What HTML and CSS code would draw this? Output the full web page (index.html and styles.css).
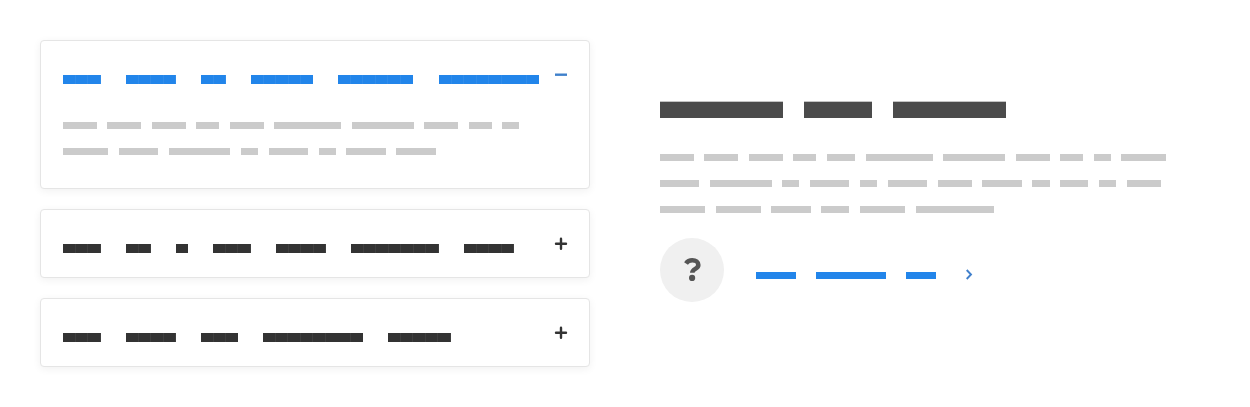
FILE: index.html
```html
<!DOCTYPE html>
<html lang="en">
<head>
<meta charset="utf-8">
<title>FAQ</title>
<link rel="stylesheet" href="styles.css">
</head>
<body>
<main class="faq">
  <section class="accordion">
    <article class="card card-open">
      <header class="card-head">
        <h3 class="words question"><i style="--n:3"></i><i style="--n:4"></i><i style="--n:2"></i><i style="--n:5"></i><i style="--n:6"></i><i style="--n:8"></i></h3>
        <svg class="toggle" viewBox="0 0 14 14"><path d="M1 7.7H13"/></svg>
      </header>
      <div class="copy">
        <p class="words"><i style="--n:6"></i><i style="--n:6"></i><i style="--n:6"></i><i style="--n:4"></i><i style="--n:6"></i><i style="--n:12"></i><i style="--n:11"></i><i style="--n:6"></i><i style="--n:4"></i><i style="--n:3"></i></p>
        <p class="words"><i style="--n:8"></i><i style="--n:7"></i><i style="--n:11"></i><i style="--n:3"></i><i style="--n:7"></i><i style="--n:3"></i><i style="--n:7"></i><i style="--n:7"></i></p>
      </div>
    </article>
    <article class="card">
      <header class="card-head">
        <h3 class="words question"><i style="--n:3"></i><i style="--n:2"></i><i style="--n:1"></i><i style="--n:3"></i><i style="--n:4"></i><i style="--n:7"></i><i style="--n:4"></i></h3>
        <svg class="toggle" viewBox="0 0 14 14"><path d="M2 6.8H12M7 1.8V11.8"/></svg>
      </header>
    </article>
    <article class="card">
      <header class="card-head">
        <h3 class="words question"><i style="--n:3"></i><i style="--n:4"></i><i style="--n:3"></i><i style="--n:8"></i><i style="--n:5"></i></h3>
        <svg class="toggle" viewBox="0 0 14 14"><path d="M2 6.8H12M7 1.8V11.8"/></svg>
      </header>
    </article>
  </section>
  <section class="intro">
    <h2 class="words title"><i style="--n:11"></i><i style="--n:6"></i><i style="--n:10"></i></h2>
    <div class="copy">
      <p class="words"><i style="--n:6"></i><i style="--n:6"></i><i style="--n:6"></i><i style="--n:4"></i><i style="--n:5"></i><i style="--n:12"></i><i style="--n:11"></i><i style="--n:6"></i><i style="--n:4"></i><i style="--n:3"></i><i style="--n:8"></i></p>
      <p class="words"><i style="--n:7"></i><i style="--n:11"></i><i style="--n:3"></i><i style="--n:7"></i><i style="--n:3"></i><i style="--n:7"></i><i style="--n:6"></i><i style="--n:7"></i><i style="--n:3"></i><i style="--n:5"></i><i style="--n:3"></i><i style="--n:6"></i></p>
      <p class="words"><i style="--n:8"></i><i style="--n:8"></i><i style="--n:7"></i><i style="--n:5"></i><i style="--n:8"></i><i style="--n:14"></i></p>
    </div>
    <div class="contact">
      <span class="badge"><svg class="help" viewBox="0 0 18 24"><path d="M3 5.5C4.5 3.3 6.6 2.3 9.3 2.3C12.9 2.3 15.3 4.1 15.3 7C15.3 11.2 9.3 10.6 9.3 14.8"/><circle cx="9.1" cy="19.9" r="3.1"/></svg></span>
      <span class="words link"><i style="--n:4"></i><i style="--n:7"></i><i style="--n:3"></i></span>
      <svg class="chevron" viewBox="0 0 8 12"><path d="M1.7 2L6 6.5L1.7 11"/></svg>
    </div>
  </section>
</main>
</body>
</html>
```
FILE: styles.css
```css
* { box-sizing: border-box; }
body { margin: 0; background: #fff; font-family: "Open Sans", sans-serif; }
h2, h3, p { margin: 0; }

.faq {
  display: grid;
  grid-template-columns: 550px 520px;
  column-gap: 70px;
  height: 407px;
  padding: 40px 40px 0;
}

.accordion { display: flex; flex-direction: column; gap: 20px; }
.card {
  height: 69px;
  padding: 27px 21px 0 22px;
  background: #fff;
  border: 1px solid #e5e5e5;
  border-radius: 4px;
  box-shadow: 0 2px 8px rgba(0, 0, 0, .06);
}
.card-open { height: 149px; padding-top: 26px; }
.card-head { display: flex; align-items: flex-start; justify-content: space-between; color: #333; }
.card-open .card-head { color: #2285ea; }

/* Each bar is a word, sized by its number of characters. */
.words { display: flex; gap: calc(var(--u) * 2 - var(--extra)); --extra: 0px; }
.words i {
  flex: none;
  width: calc(var(--n) * var(--u) + var(--extra));
  height: 100%;
  background: currentColor;
}

.question { --u: 12.52px; height: 9px; margin-top: 7px; }
.card-open .question { margin-top: 8px; }
.question i {
  background-image: repeating-linear-gradient(90deg, transparent 0 11.9px, rgba(255, 255, 255, .06) 11.9px 12.52px);
}
.toggle { width: 14px; height: 14px; fill: none; stroke: currentColor; stroke-width: 2.4; stroke-linecap: round; }
.card-open .toggle { stroke: #3f80cb; stroke-linecap: butt; }

.copy { display: flex; flex-direction: column; gap: 19px; color: #cbcbcb; }
.copy .words { --u: 5.56px; --extra: .5px; height: 7px; }
.card .copy { padding-top: 38px; }

.intro { padding-top: 62px; }
.title { --u: 11.13px; --extra: 1.4px; height: 16px; margin-left: -.4px; color: #4b4b4b; }
.title i { box-shadow: 0 -.5px 0 #8a8a8a; }
.intro .copy { padding-top: 36px; }

.contact { display: flex; margin-top: 25px; color: #2285ea; }
.badge {
  display: flex;
  align-items: center;
  justify-content: center;
  width: 64px;
  height: 64px;
  border-radius: 50%;
  background: #f0f0f0;
}
.help { width: 18px; height: 24px; fill: none; stroke: #555; stroke-width: 4.6; }
.help circle { fill: #555; stroke: none; }
.link { --u: 10px; height: 7px; margin: 34px 0 0 32px; }
.chevron { width: 8px; height: 12px; margin: 30px 0 0 29px; fill: none; stroke: #4180cc; stroke-width: 1.9; }
```
